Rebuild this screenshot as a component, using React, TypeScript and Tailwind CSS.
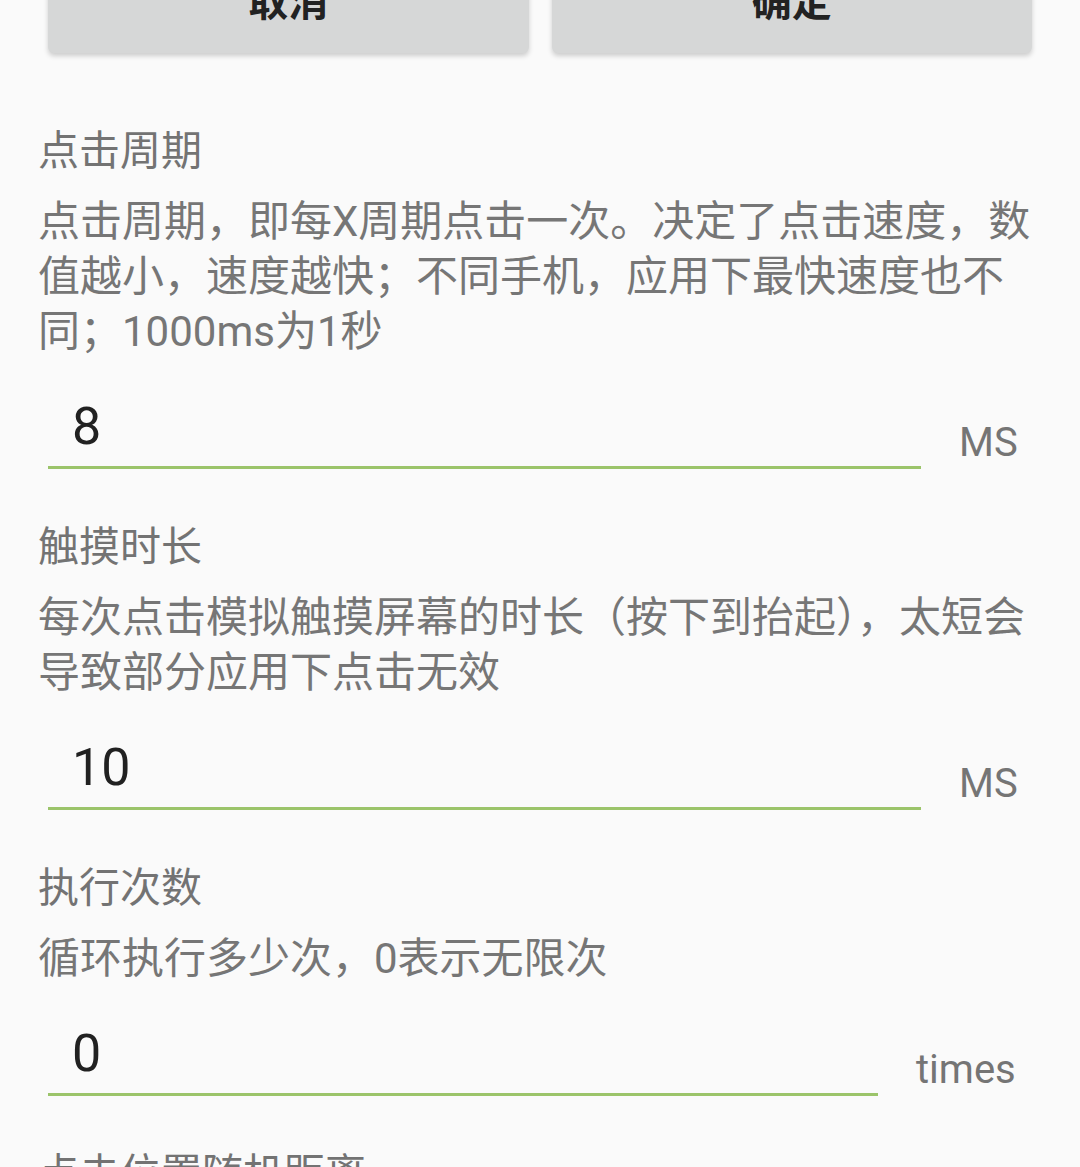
const font = { fontFamily: '"Roboto", "Noto Sans CJK SC", sans-serif' };

interface FieldProps {
  title: string;
  lines: string[];
  value: string;
  unit: string;
  inputWidth: string;
}

const Field = ({ title, lines, value, unit, inputWidth }: FieldProps) => {
  return (
    <section className="pt-[51px]">
      <h2 className="text-[41px] leading-[55px] text-[#737373] font-normal">{title}</h2>
      <div className="mt-[15px] text-[42px] leading-[55px] text-[#767676]">
        {lines.map((l) => (
          <div key={l} className="whitespace-nowrap">
            {l}
          </div>
        ))}
      </div>
      <div className="mt-[42px] flex items-end">
        <div
          className={`${inputWidth} ml-[10px] border-b-[3px] border-[#9bc46a] pl-[24px] pb-[13px] text-[52px] leading-[52px] text-[#212121]`}
        >
          {value}
        </div>
        <span className="ml-[38px] pb-[6px] text-[40px] leading-[40px] text-[#757575]">{unit}</span>
      </div>
    </section>
  );
};

export default function App() {
  return (
    <div className="min-h-[1167px] overflow-hidden bg-[#fafafa]" style={font}>
      <div className="-mt-[47px] flex gap-[23px] px-[48px]">
        <button className="h-[100px] flex-1 rounded-[6px] bg-[#d6d7d7] text-[40px] font-bold text-[#222] shadow-[0_3px_5px_rgba(0,0,0,0.18)]">
          取消
        </button>
        <button className="h-[100px] flex-1 rounded-[6px] bg-[#d6d7d7] text-[40px] font-bold text-[#222] shadow-[0_3px_5px_rgba(0,0,0,0.18)]">
          确定
        </button>
      </div>
      <div className="pl-[38px] pt-[20px]">
        <Field
          title="点击周期"
          lines={[
            "点击周期，即每X周期点击一次。决定了点击速度，数",
            "值越小，速度越快；不同手机，应用下最快速度也不",
            "同；1000ms为1秒",
          ]}
          value="8"
          unit="MS"
          inputWidth="w-[873px]"
        />
        <Field
          title="触摸时长"
          lines={["每次点击模拟触摸屏幕的时长（按下到抬起），太短会", "导致部分应用下点击无效"]}
          value="10"
          unit="MS"
          inputWidth="w-[873px]"
        />
        <Field
          title="执行次数"
          lines={["循环执行多少次，0表示无限次"]}
          value="0"
          unit="times"
          inputWidth="w-[830px]"
        />
        <section className="pt-[51px]">
          <h2 className="text-[41px] leading-[55px] text-[#737373] font-normal">点击位置随机距离</h2>
        </section>
      </div>
    </div>
  );
}
